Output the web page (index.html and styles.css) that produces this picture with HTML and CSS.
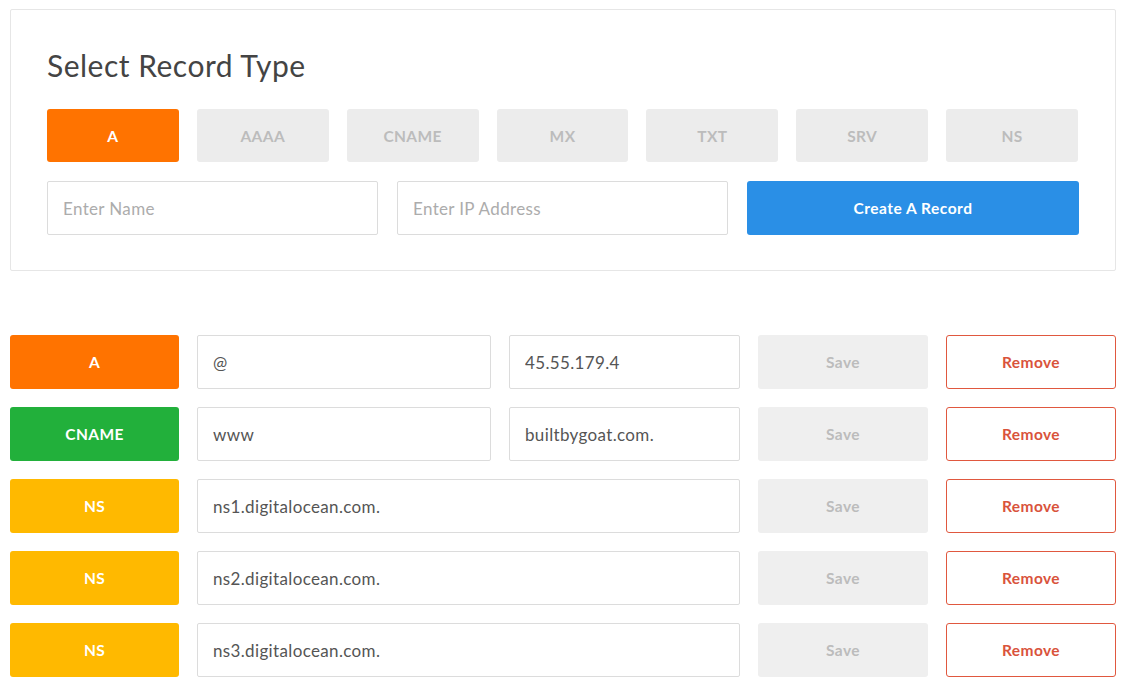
FILE: index.html
```html
<!DOCTYPE html>
<html>
<head>
<meta charset="utf-8">
<link rel="stylesheet" href="styles.css">
</head>
<body>
<div class="page">
  <section class="card">
    <h1 class="title">Select Record Type</h1>
    <div class="types">
      <button class="type active">A</button>
      <button class="type">AAAA</button>
      <button class="type">CNAME</button>
      <button class="type">MX</button>
      <button class="type">TXT</button>
      <button class="type">SRV</button>
      <button class="type">NS</button>
    </div>
    <div class="create">
      <input class="field" placeholder="Enter Name">
      <input class="field" placeholder="Enter IP Address">
      <button class="create-btn">Create A Record</button>
    </div>
  </section>

  <div class="records">
    <div class="row">
      <div class="label a">A</div>
      <input class="field" value="@">
      <input class="field" value="45.55.179.4">
      <button class="save">Save</button>
      <button class="remove">Remove</button>
    </div>
    <div class="row">
      <div class="label cname">CNAME</div>
      <input class="field" value="www">
      <input class="field" value="builtbygoat.com.">
      <button class="save">Save</button>
      <button class="remove">Remove</button>
    </div>
    <div class="row">
      <div class="label ns">NS</div>
      <input class="field wide" value="ns1.digitalocean.com.">
      <button class="save">Save</button>
      <button class="remove">Remove</button>
    </div>
    <div class="row">
      <div class="label ns">NS</div>
      <input class="field wide" value="ns2.digitalocean.com.">
      <button class="save">Save</button>
      <button class="remove">Remove</button>
    </div>
    <div class="row">
      <div class="label ns">NS</div>
      <input class="field wide" value="ns3.digitalocean.com.">
      <button class="save">Save</button>
      <button class="remove">Remove</button>
    </div>
  </div>
</div>
</body>
</html>
```

FILE: styles.css
```css
* { box-sizing: border-box; }
html, body { margin: 0; padding: 0; background: #fff; }
body {
  font-family: Lato, "Liberation Sans", sans-serif;
  color: #444;
}
.page {
  width: 1106px;
  margin: 9px 0 0 10px;
}
.card {
  border: 1px solid #e6e6e6;
  border-radius: 2px;
  padding: 36px 37px 36px 36px;
  height: 262px;
}
.title {
  margin: 0;
  font-weight: 400;
  font-size: 30px;
  line-height: 38px;
  letter-spacing: 0.5px;
  color: #444;
}
.types {
  display: flex;
  gap: 18px;
  margin-top: 25px;
}
.type {
  flex: 1;
  height: 53px;
  border: none;
  border-radius: 3px;
  background: #ececec;
  color: #bcbcbc;
  font-family: inherit;
  font-weight: 700;
  font-size: 15.5px;
  letter-spacing: 0.4px;
}
.type.active { background: #ff7300; color: #fff; }
.create {
  display: grid;
  grid-template-columns: 331px 331px 332px;
  gap: 19px;
  margin-top: 19px;
}
.field {
  height: 54px;
  border: 1px solid #dcdcdc;
  border-radius: 2px;
  padding: 0 15px;
  font-family: inherit;
  font-size: 17px;
  letter-spacing: 0.35px;
  color: #555;
  background: #fff;
  outline: none;
  min-width: 0;
}
.field::placeholder { color: #acacac; }
.create-btn {
  height: 54px;
  border: none;
  border-radius: 3px;
  background: #2a8fe6;
  color: #fff;
  font-family: inherit;
  font-weight: 700;
  font-size: 15.5px;
  letter-spacing: 0.5px;
}
.records {
  margin-top: 64px;
  display: flex;
  flex-direction: column;
  gap: 18px;
}
.row {
  display: grid;
  grid-template-columns: 169px 294px 231px 170px 170px;
  gap: 18px;
  height: 54px;
}
.row > * { height: 54px; }
.field.wide { grid-column: span 2; }
.label {
  border-radius: 3px;
  color: #fff;
  font-weight: 700;
  font-size: 15.5px;
  letter-spacing: 0.4px;
  display: flex;
  align-items: center;
  justify-content: center;
}
.label.a { background: #ff7300; }
.label.cname { background: #22b03b; }
.label.ns { background: #ffb900; }
.save {
  border: none;
  border-radius: 3px;
  background: #efefef;
  color: #bcbcbc;
  font-family: inherit;
  font-weight: 700;
  font-size: 15.5px;
  letter-spacing: 0.4px;
}
.remove {
  border: 1.5px solid #e0583f;
  border-radius: 3px;
  background: #fff;
  color: #d9533c;
  font-family: inherit;
  font-weight: 700;
  font-size: 15.5px;
  letter-spacing: 0.4px;
}
```
